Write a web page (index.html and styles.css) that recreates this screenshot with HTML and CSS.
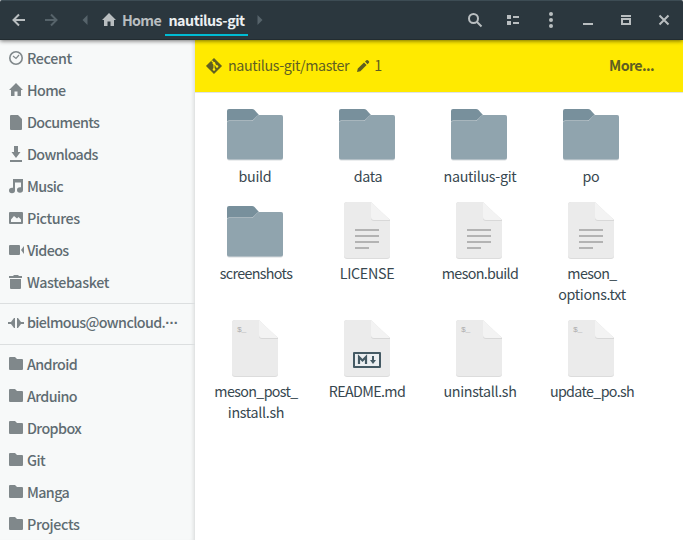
FILE: index.html
```html
<!DOCTYPE html>
<html lang="en">
<head>
<meta charset="utf-8">
<title>nautilus-git</title>
<link rel="stylesheet" href="styles.css">
</head>
<body>
<svg class="defs" width="0" height="0">
  <defs>
    <symbol id="home" viewBox="0 0 16 16"><path d="M8 1 1 8h2v6h3.500V9.500h3V14H13V8h2z"/></symbol>
    <symbol id="dir" viewBox="0 0 16 16"><path d="M2 1h5l2 2h5q1 0 1 1v9q0 1-1 1H2q-1 0-1-1V2q0-1 1-1z"/></symbol>
    <symbol id="folder" viewBox="0 0 64 64">
      <path d="M6 7h23q1.500 0 2.500 1l4 4.500V30H4V9q0-2 2-2z" fill="#78909c"/>
      <path d="M4 20q0-1.500 2-1.500h22q1.500 0 2.500-1l3.500-3.500q1-1 2.500-1H58q2 0 2 2v41.500q0 2-2 2H6q-2 0-2-2z" fill="#d7dbde"/>
      <path d="M4 20.500q0-1.500 2-1.500h22q1.500 0 2.500-1l3.500-4q1-1 2.500-1H58q2 0 2 2v40.500q0 2-2 2H6q-2 0-2-2z" fill="#90a4ae"/>
    </symbol>
    <symbol id="file" viewBox="0 0 64 64">
      <path d="M12 3h24l19 19v35q0 3-3 3H12q-3 0-3-3V6q0-3 3-3z" fill="#dcdcdc"/>
      <path d="M12 3h24l19 18v35q0 3-3 3H12q-3 0-3-3V6q0-3 3-3z" fill="#ebebeb"/>
      <path d="M36 4v15q0 3 3 3h16v-1z" fill="#d8d8d8"/>
      <path d="M36 3v15q0 3 3 3h16z" fill="#f3f3f3"/>
    </symbol>
    <symbol id="text" viewBox="0 0 64 64"><use href="#file"/><path d="M20 30h24v2H20zm0 6h24v2H20zm0 6h24v2H20zm0 6h14v2H20z" fill="#b3b3b3"/></symbol>
  </defs>
</svg>
<div class="window">
  <header class="bar">
    <svg class="ic back" viewBox="0 0 16 16"><path class="ln" d="M14 8H3M8 2.500 2.500 8 8 13.500"/></svg>
    <svg class="ic fwd dim" viewBox="0 0 16 16"><path class="ln" d="M2 8h11M8 2.500 13.500 8 8 13.500"/></svg>
    <svg class="ic prev dim" viewBox="0 0 16 16"><path d="M10.500 3v10L5.500 8z"/></svg>
    <div class="crumb parent"><svg class="ic" viewBox="0 0 16 16"><use href="#home"/></svg><span>Home</span></div>
    <div class="crumb current">nautilus-git</div>
    <svg class="ic next dim" viewBox="0 0 16 16"><path d="M5.500 3v10l5-5z"/></svg>
    <div class="tools">
      <svg class="ic" viewBox="0 0 16 16"><circle class="ln" cx="6.500" cy="6.500" r="4.500"/><path class="ln" d="m10 10 4.500 4.500"/></svg>
      <svg class="ic" viewBox="0 0 16 16"><path d="M2 3h4v4H2zm0 6h4v4H2zm6-5h6v2H8zm0 6h6v2H8z"/></svg>
      <svg class="ic menu" viewBox="0 0 16 16"><circle cx="8" cy="2" r="2"/><circle cx="8" cy="8" r="2"/><circle cx="8" cy="14" r="2"/></svg>
      <svg class="ic" viewBox="0 0 16 16"><path d="M3 11h10v2H3z"/></svg>
      <svg class="ic" viewBox="0 0 16 16"><path d="M3 3h10v2H3z"/><path fill-rule="evenodd" d="M3 6h10v7H3zm2 2v3h6V8z"/></svg>
      <svg class="ic" viewBox="0 0 16 16"><path class="ln" d="m3.500 3.500 9 9m0-9-9 9"/></svg>
    </div>
  </header>
  <div class="body">
    <nav class="side">
      <div class="item loose"><svg class="ic" viewBox="0 0 16 16"><circle class="ln ring" cx="8" cy="8" r="6.200"/><path class="ln thin" d="M5 6l3 2.500L11 5"/></svg>Recent</div>
      <div class="item"><svg class="ic"><use href="#home"/></svg>Home</div>
      <div class="item"><svg class="ic" viewBox="0 0 16 16"><path d="M3 1h7l4 4v10q0 1-1 1H3q-1 0-1-1V2q0-1 1-1z"/></svg>Documents</div>
      <div class="item"><svg class="ic" viewBox="0 0 16 16"><path d="M6 0h4v6h2.500L8 12 3.500 6H6zM2 14h12v2H2z"/></svg>Downloads</div>
      <div class="item"><svg class="ic" viewBox="0 0 16 16"><path d="M5 1h10v11a3 2.700 0 1 1-3-2.700h1V4.500H7V12.500a3 2.700 0 1 1-3-2.700h1z"/></svg>Music</div>
      <div class="item loose"><svg class="ic" viewBox="0 0 16 16"><path fill-rule="evenodd" d="M2 2h12q1 0 1 1v10q0 1-1 1H2q-1 0-1-1V3q0-1 1-1zm1 10h10V9.500L10.500 7 9 8.500 6 6 3 9.500z"/></svg>Pictures</div>
      <div class="item"><svg class="ic" viewBox="0 0 16 16"><path d="M2 3h9q1 0 1 1v8q0 1-1 1H2q-1 0-1-1V4q0-1 1-1zM16 4v8l-3-4z"/></svg>Videos</div>
      <div class="item loose"><svg class="ic" viewBox="0 0 16 16"><path d="M1 2h4l1-1h4l1 1h3v2H1zM2 5h11v9q0 1-1 1H3q-1 0-1-1z"/></svg>Wastebasket</div>
      <div class="item remote"><svg class="ic" viewBox="0 0 16 16"><path d="M0 7h3l3-4h1v10H6L3 9H0zM16 7h-3l-3-4H9v10h1l3-4h3z"/></svg><span>bielmous@owncloud.<span class="dots">···</span></span></div>
      <div class="item"><svg class="ic"><use href="#dir"/></svg>Android</div>
      <div class="item"><svg class="ic"><use href="#dir"/></svg>Arduino</div>
      <div class="item"><svg class="ic"><use href="#dir"/></svg>Dropbox</div>
      <div class="item"><svg class="ic"><use href="#dir"/></svg>Git</div>
      <div class="item"><svg class="ic"><use href="#dir"/></svg>Manga</div>
      <div class="item loose"><svg class="ic"><use href="#dir"/></svg>Projects</div>
    </nav>
    <main class="main">
      <div class="git">
        <svg class="ic" viewBox="0 0 16 16"><path d="M8 .2 15.800 8 8 15.800.2 8z" stroke="#5f5f22" stroke-linejoin="round" stroke-width=".4"/><path d="M5.500 2.500 8 5v7M8 5.500l3 3" fill="none" stroke="#ffea00" stroke-width="1.100"/><g fill="#ffea00"><circle cx="8" cy="5.200" r="1.300"/><circle cx="8" cy="11.500" r="1.300"/><circle cx="11" cy="8.500" r="1.300"/></g></svg>
        <span class="repo">nautilus-git/master</span>
        <svg class="ic pen" viewBox="0 0 14 14"><path d="M1 13 1.800 9.600 8 3.500 10.600 6.100 4.400 12.200zM9 2.600l1.400-1.400q.8-.6 1.500 0l1 1q.7.8 0 1.500L11.500 5.200z"/></svg>
        <span class="count">1</span>
        <b class="more">More...</b>
      </div>
      <div class="grid">
        <div class="cell"><svg><use href="#folder"/></svg><span>build</span></div>
        <div class="cell"><svg><use href="#folder"/></svg><span class="shift">data</span></div>
        <div class="cell"><svg><use href="#folder"/></svg><span class="shift">nautilus-git</span></div>
        <div class="cell"><svg><use href="#folder"/></svg><span>po</span></div>
        <div class="cell"><svg><use href="#folder"/></svg><span class="tight shift">screenshots</span></div>
        <div class="cell"><svg><use href="#text"/></svg><span>LICENSE</span></div>
        <div class="cell"><svg><use href="#text"/></svg><span class="tight shift">meson.build</span></div>
        <div class="cell"><svg><use href="#text"/></svg><span class="shift"><span class="tight">meson_</span><br>options.txt</span></div>
        <div class="cell"><svg><use href="#file"/><text class="sh" x="14" y="15">$_</text></svg><span class="shift"><span class="tight">meson_post_</span><br>install.sh</span></div>
        <div class="cell"><svg><use href="#file"/><rect x="19" y="36" width="26" height="14" fill="#eceff1" stroke="#455a64" stroke-width="2" stroke-linejoin="round"/><path d="M24 47v-7l3.500 3.500L31 40v7" fill="none" stroke="#455a64" stroke-width="2.200"/><path d="M37 39h2v4h2l-3 4-3-4h2z" fill="#455a64"/></svg><span class="tight">README.md</span></div>
        <div class="cell"><svg><use href="#file"/><text class="sh" x="14" y="15">$_</text></svg><span class="shift">uninstall.sh</span></div>
        <div class="cell"><svg><use href="#file"/><text class="sh" x="14" y="15">$_</text></svg><span class="tight shift">update_po.sh</span></div>
      </div>
    </main>
  </div>
</div>
</body>
</html>
```
FILE: styles.css
```css
* { box-sizing: border-box; }
body { margin: 0; font: 14.3px/21px "Noto Sans CJK SC", "Open Sans", sans-serif; overflow: hidden; }
.defs { position: absolute; }
.window { width: 683px; height: 540px; display: flex; flex-direction: column; }
.ic { width: 16px; height: 16px; flex: none; fill: currentColor; }
.ln { fill: none; stroke: currentColor; stroke-width: 2; }
.ring { stroke-width: 1.6; }
.thin { stroke-width: 1.2; }
.bar {
  height: 40px; flex: none; display: flex; align-items: center; padding: 0 11px;
  background: #2b373e; color: #b9bec0; font-weight: 700; letter-spacing: -.7px;
  border-top: 1px solid #3d4c54; border-bottom: 1px solid #222c31;
  border-radius: 2px 2px 0 0; box-shadow: 0 1px 4px rgba(0,0,0,.55); position: relative;
}
.dim { color: #56636a; }
.fwd { margin-left: 16px; }
.prev { margin-left: 18px; }
.crumb { height: 38px; display: flex; align-items: center; white-space: nowrap; }
.parent { width: 60px; gap: 5px; margin-left: 8px; padding: 0 0 1px; }
.current { width: 83px; margin: 0 0 1px 4px; justify-content: center; color: #eceff1; letter-spacing: -.5px; box-shadow: inset 0 -3px #2b373e, inset 0 -5px #00bcd4; }
.next { margin-left: 4px; }
.tools { margin-left: auto; display: flex; gap: 22px; }
.menu { margin-right: -1px; }
.body { flex: 1; display: flex; min-height: 0; }
.side {
  width: 195px; flex: none; background: #f7f9f9; color: #5f6c72; font-weight: 500; letter-spacing: -.62px;
  padding-top: 3px; overflow: hidden; box-shadow: inset -4px 0 4px -3px rgba(0,0,0,.14);
}
.side .ic { color: #80888b; margin-top: 1px; }
.item { height: 32px; display: flex; align-items: center; gap: 3px; padding: 0 0 3px 8px; white-space: nowrap; }
.loose { letter-spacing: -.38px; }
.dots { font-family: "Liberation Sans", sans-serif; font-weight: 700; letter-spacing: -.5px; }
.remote { height: 42px; margin: 4px 0; border: solid #dcdfe0; border-width: 1px 0; }
.main { flex: 1; background: #fff; }
.git {
  height: 53px; display: flex; align-items: center; padding: 0 29px 3px 11px; gap: 6px; letter-spacing: -.4px;
  background: #ffea00; color: #5f5f22; border-bottom: 1px solid #dfe3e8;
}
.git .ic { margin-top: 2px; }
.git .pen { width: 14px; height: 14px; margin-left: 1px; }
.count { margin-left: -2px; }
.more { margin-left: auto; letter-spacing: -.65px; }
.grid { display: grid; grid-template-columns: repeat(4, 112px); row-gap: 12px; padding: 9px 0 0 4px; color: #37474f; letter-spacing: -.32px; }
.cell { display: flex; flex-direction: column; align-items: center; text-align: center; }
.cell svg { width: 64px; height: 64px; margin-bottom: -1px; }
.cell > span { padding-bottom: 1px; }
.tight { letter-spacing: -.65px; }
.shift { padding-left: 2px; }
.sh { font: 8px "Liberation Mono", monospace; fill: #aaa; }
```
